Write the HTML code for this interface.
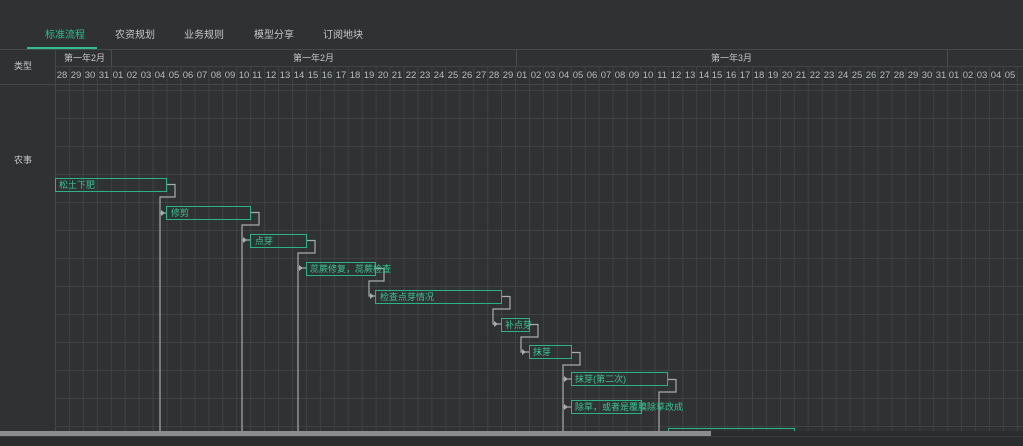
<!DOCTYPE html>
<html><head><meta charset="utf-8"><style>
html,body{margin:0;padding:0;background:#2f3133;width:1023px;height:446px;overflow:hidden}
svg{display:block}
text{font-family:"Liberation Sans","Noto Sans CJK SC",sans-serif}
.d{font-size:9.5px;fill:#b8bcbd;text-anchor:middle}
.b{fill:none;stroke:#2bb387;stroke-width:1}
.bt{font-size:9px;fill:#34c892}
.c{fill:none;stroke:#a9acad;stroke-width:1.2}
</style></head><body>
<svg width="1023" height="446" viewBox="0 0 1023 446">
<defs>
<pattern id="vg" x="55" y="0" width="13.94" height="446" patternUnits="userSpaceOnUse">
<line x1="0.5" y1="0" x2="0.5" y2="446" stroke="#3e4143" stroke-width="1"/>
</pattern>
</defs>
<rect width="1023" height="446" fill="#2f3133"/>
<!-- tabs -->
<g font-size="10" fill="#c4c6c7">
<text x="45" y="38" fill="#2fbf8c">标准流程</text>
<text x="115" y="38">农资规划</text>
<text x="184" y="38">业务规则</text>
<text x="254" y="38">模型分享</text>
<text x="323" y="38">订阅地块</text>
</g>
<rect x="27" y="47" width="70" height="2" fill="#2fbf8c"/>
<line x1="0" y1="49.5" x2="1023" y2="49.5" stroke="#45484a"/>
<!-- grid -->
<rect x="55" y="66" width="968" height="366" fill="url(#vg)"/>
<line x1="55.5" y1="50" x2="55.5" y2="432" stroke="#45484a"/>
<line x1="55" y1="66.5" x2="1023" y2="66.5" stroke="#404345"/>
<line x1="0" y1="84.5" x2="1023" y2="84.5" stroke="#45484a"/>
<g stroke="#3e4143">
<line x1="55" y1="90.5" x2="1023" y2="90.5"/>
<line x1="55" y1="118.5" x2="1023" y2="118.5"/>
<line x1="55" y1="146.5" x2="1023" y2="146.5"/>
<line x1="55" y1="174.5" x2="1023" y2="174.5"/>
<line x1="55" y1="202.5" x2="1023" y2="202.5"/>
<line x1="55" y1="230.5" x2="1023" y2="230.5"/>
<line x1="55" y1="258.5" x2="1023" y2="258.5"/>
<line x1="55" y1="286.5" x2="1023" y2="286.5"/>
<line x1="55" y1="314.5" x2="1023" y2="314.5"/>
<line x1="55" y1="342.5" x2="1023" y2="342.5"/>
<line x1="55" y1="370.5" x2="1023" y2="370.5"/>
<line x1="55" y1="398.5" x2="1023" y2="398.5"/>
<line x1="55" y1="426.5" x2="1023" y2="426.5"/>
</g>
<g stroke="#4a4d4f"><line x1="111.5" y1="50" x2="111.5" y2="66"/><line x1="516.5" y1="50" x2="516.5" y2="66"/><line x1="947.5" y1="50" x2="947.5" y2="66"/></g>
<g font-size="9" fill="#c4c6c7">
<text x="14" y="69">类型</text>
<text x="14" y="163">农事</text>
<text x="64" y="61">第一年2月</text>
<text x="293" y="61">第一年2月</text>
<text x="711" y="61">第一年3月</text>
</g>
<g class="d">
<text x="62" y="78">28</text><text x="76" y="78">29</text><text x="90" y="78">30</text><text x="104" y="78">31</text>
<text x="118" y="78">01</text><text x="132" y="78">02</text><text x="146" y="78">03</text><text x="160" y="78">04</text><text x="174" y="78">05</text><text x="188" y="78">06</text><text x="202" y="78">07</text><text x="216" y="78">08</text><text x="230" y="78">09</text><text x="244" y="78">10</text><text x="257" y="78">11</text><text x="271" y="78">12</text><text x="285" y="78">13</text><text x="299" y="78">14</text><text x="313" y="78">15</text><text x="327" y="78">16</text><text x="341" y="78">17</text><text x="355" y="78">18</text><text x="369" y="78">19</text><text x="383" y="78">20</text><text x="397" y="78">21</text><text x="411" y="78">22</text><text x="425" y="78">23</text><text x="439" y="78">24</text><text x="453" y="78">25</text><text x="467" y="78">26</text><text x="481" y="78">27</text><text x="494" y="78">28</text><text x="508" y="78">29</text>
<text x="522" y="78">01</text><text x="536" y="78">02</text><text x="550" y="78">03</text><text x="564" y="78">04</text><text x="578" y="78">05</text><text x="592" y="78">06</text><text x="606" y="78">07</text><text x="620" y="78">08</text><text x="634" y="78">09</text><text x="648" y="78">10</text><text x="662" y="78">11</text><text x="676" y="78">12</text><text x="690" y="78">13</text><text x="704" y="78">14</text><text x="717" y="78">15</text><text x="731" y="78">16</text><text x="745" y="78">17</text><text x="759" y="78">18</text><text x="773" y="78">19</text><text x="787" y="78">20</text><text x="801" y="78">21</text><text x="815" y="78">22</text><text x="829" y="78">23</text><text x="843" y="78">24</text><text x="857" y="78">25</text><text x="871" y="78">26</text><text x="885" y="78">27</text><text x="899" y="78">28</text><text x="913" y="78">29</text><text x="927" y="78">30</text><text x="941" y="78">31</text>
<text x="954" y="78">01</text><text x="968" y="78">02</text><text x="982" y="78">03</text><text x="996" y="78">04</text><text x="1010" y="78">05</text>
</g>
<!-- connectors -->
<g class="c">
<path d="M166 184.5H175V197H160V446"/><path d="M160 213H166"/>
<path d="M250 212.5H259V225H242V446"/><path d="M242 240H250"/>
<path d="M306 240.5H315V253H298V446"/><path d="M298 268H306"/>
<path d="M375 268.5H384V281H369V296H375"/>
<path d="M501 296.5H510V309H493V324H501"/>
<path d="M529 324.5H538V337H521V352H529"/>
<path d="M571 352.5H580V365H563V446"/><path d="M563 379H571"/><path d="M563 407H571"/>
<path d="M667 379.5H676V392H659V446"/>
</g>
<g fill="#a9acad">
<path d="M161 210l4 3-4 3z"/><path d="M243 237l4 3-4 3z"/><path d="M299 265l4 3-4 3z"/><path d="M370 293l4 3-4 3z"/><path d="M494 321l4 3-4 3z"/><path d="M522 349l4 3-4 3z"/><path d="M564 376l4 3-4 3z"/><path d="M564 404l4 3-4 3z"/>
</g>
<!-- bars -->
<g>
<rect class="b" x="55.5" y="178.5" width="111" height="13"/><text class="bt" x="59" y="188">松土下肥</text>
<rect class="b" x="166.5" y="206.5" width="84" height="13"/><text class="bt" x="171" y="216">修剪</text>
<rect class="b" x="250.5" y="234.5" width="56" height="13"/><text class="bt" x="255" y="244">点芽</text>
<rect class="b" x="306.5" y="262.5" width="69" height="13"/><text class="bt" x="310" y="272">蕊蕨修复，蕊蕨检查</text>
<rect class="b" x="375.5" y="290.5" width="126" height="13"/><text class="bt" x="380" y="300">检查点芽情况</text>
<rect class="b" x="501.5" y="318.5" width="28" height="13"/><text class="bt" x="505" y="328">补点芽</text>
<rect class="b" x="529.5" y="345.5" width="42" height="13"/><text class="bt" x="533" y="355">抹芽</text>
<rect class="b" x="571.5" y="372.5" width="96" height="13"/><text class="bt" x="575" y="382">抹芽(第二次)</text>
<rect class="b" x="571.5" y="400.5" width="70" height="13"/><text class="bt" x="575" y="410">除草，或者是覆膜除草改成</text>
<rect class="b" x="668.5" y="428.5" width="126" height="13"/>
</g>
<!-- scrollbar -->
<rect x="0" y="431" width="1023" height="15" fill="#2a2c2e"/>
<line x1="0" y1="436.5" x2="1023" y2="436.5" stroke="#3a3d3f"/>
<rect x="0" y="431" width="711" height="5" fill="#8a8c8d"/>
</svg>
</body></html>
